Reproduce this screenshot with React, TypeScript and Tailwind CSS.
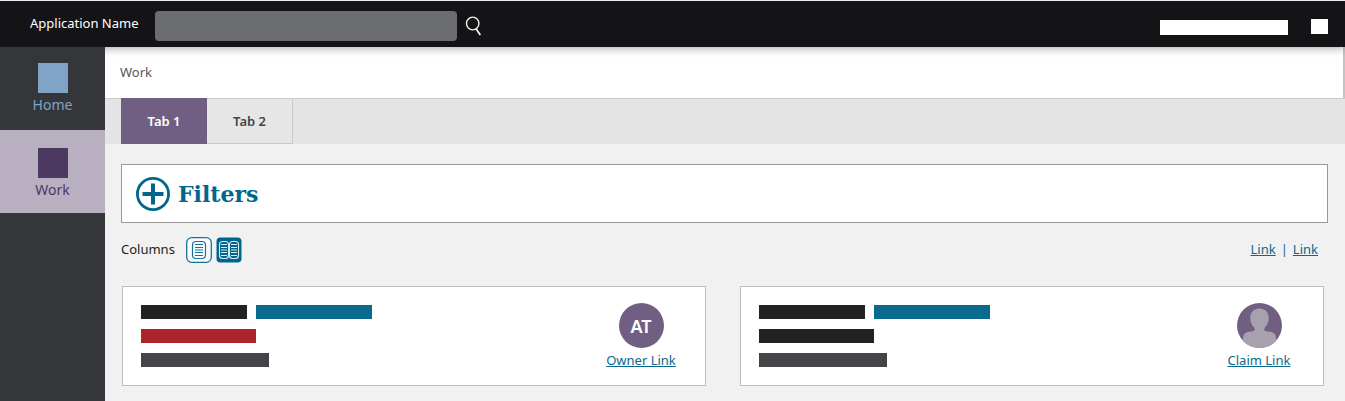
import type { ReactNode } from "react";

function SearchIcon() {
  return (
    <svg viewBox="0 0 18 20" className="h-5 w-[18px]" fill="none" stroke="#f4f4f4" strokeWidth="1.4" aria-hidden="true">
      <ellipse cx="7.7" cy="7.5" rx="6.2" ry="6.4" />
      <path d="M11.2 13 15.3 19" strokeWidth="1.8" />
    </svg>
  );
}

function PlusCircleIcon() {
  return (
    <svg viewBox="0 0 34 34" className="size-[34px]" fill="none" stroke="#00668c" aria-hidden="true">
      <circle cx="17" cy="17" r="15.6" strokeWidth="2.8" />
      <path d="M17 6.500v21M6.500 17h21" strokeWidth="4" />
    </svg>
  );
}

function OneColumnIcon() {
  return (
    <svg viewBox="0 0 26 26" className="size-[26px]" fill="none" stroke="#19729a" aria-hidden="true">
      <rect x="0.7" y="0.7" width="24.6" height="24.6" rx="5" fill="#f8fbfc" strokeWidth="1.3" />
      <rect x="6.5" y="4.5" width="13" height="17" rx="3.5" strokeWidth="1.2" />
      <path d="M9 7.5h8M9 10.5h8M9 13h8M9 15.5h8M9 18.5h8" strokeWidth="1.2" />
    </svg>
  );
}

function TwoColumnIcon() {
  return (
    <svg viewBox="0 0 26 26" className="size-[26px]" fill="none" stroke="#d9edf4" aria-hidden="true">
      <rect x="0.5" y="0.5" width="25" height="25" rx="4" fill="#00668c" stroke="none" />
      <rect x="3.5" y="4.5" width="9" height="17" rx="3" strokeWidth="1.1" />
      <rect x="13.5" y="4.5" width="9" height="17" rx="3" strokeWidth="1.1" />
      <path
        d="M5 7.5h6M5 10.5h6M5 13h6M5 15.5h6M5 18.5h6M15 7.5h6M15 10.5h6M15 13h6M15 15.5h6M15 18.5h6"
        strokeWidth="1.1"
      />
    </svg>
  );
}

function PersonAvatar() {
  return (
    <svg viewBox="0 0 45 45" className="size-[45px]" aria-hidden="true">
      <defs>
        <clipPath id="avatar-clip">
          <circle cx="22.5" cy="22.5" r="22.5" />
        </clipPath>
      </defs>
      <g clipPath="url(#avatar-clip)">
        <rect width="45" height="45" fill="#715f83" />
        <path
          fill="#a7a1ad"
          d="M22.500 5.500C17 5.500 13.300 9.300 13.300 15c0 4.400 1.800 8 4.200 9.800v2.700c-1 .9-3 1-5.500 1.200-4 .4-6 2.900-6 6.800V45h33v-9.500c0-3.900-2-6.400-6-6.800-2.500-.2-4.500-.3-5.500-1.200v-2.700c2.400-1.800 4.200-5.400 4.200-9.800 0-5.700-3.700-9.500-9.200-9.500z"
        />
      </g>
    </svg>
  );
}

function NavItem({ label, active = false }: { label: string; active?: boolean }) {
  return (
    <a
      href="#"
      aria-current={active ? "page" : undefined}
      className={
        active
          ? "flex h-[83px] flex-col items-center bg-[#b8afc1] pt-[18px] text-[#4c3960]"
          : "flex h-[83px] flex-col items-center pt-4 text-[#80a3c8]"
      }
    >
      <span className={active ? "size-[30px] bg-[#4c3960]" : "size-[30px] bg-[#80a3c8]"} />
      <span className="mt-0.5 text-sm leading-5">{label}</span>
    </a>
  );
}

function Card({ second, avatar, link }: { second: string; avatar: ReactNode; link: string }) {
  return (
    <article className="flex h-[100px] flex-1 justify-between border border-[#bcbcbc] bg-white pt-[18px] pr-7 pl-[18px]">
      <div className="flex flex-col gap-2.5">
        <div className="flex gap-[9px]">
          <span className="h-3.5 w-[106px] bg-[#222222]" />
          <span className="h-3.5 w-[116px] bg-[#09698e]" />
        </div>
        <span className={second} />
        <span className="h-3.5 w-32 bg-[#444548]" />
      </div>
      <div className="-mt-0.5 flex w-[72px] flex-col items-center">
        {avatar}
        <a href="#" className="mt-0.5 text-[13px] leading-5 whitespace-nowrap text-[#09698e] underline">
          {link}
        </a>
      </div>
    </article>
  );
}

export default function App() {
  return (
    <div className="flex min-h-screen flex-col bg-[#f1f1f1] font-['Noto_Sans','Open_Sans',sans-serif] text-[13px] text-[#222222]">
      <header className="z-10 flex h-[47px] items-center border-t border-[#e8eeee] bg-[#141416] pr-[17px] pl-[30px] shadow-[0_2px_8px_rgba(0,0,0,0.3)]">
        <span className="w-[125px] whitespace-nowrap text-white">Application Name</span>
        <form className="mr-auto flex items-center gap-2 pt-1" role="search">
          <input type="search" aria-label="Search" className="h-[30px] w-[302px] rounded bg-[#6b6c6f] px-2 text-white outline-none" />
          <button type="button" aria-label="Run search">
            <SearchIcon />
          </button>
        </form>
        <div className="flex items-center gap-[23px] pt-1">
          <span className="mt-0.5 h-[15px] w-32 bg-white" />
          <span className="h-[15px] w-[17px] bg-white" />
        </div>
      </header>

      <div className="flex flex-1">
        <nav className="z-20 w-[105px] shrink-0 bg-[#353639]">
          <NavItem label="Home" />
          <NavItem label="Work" active />
        </nav>

        <main className="min-w-0 flex-1">
          <div className="flex h-[51px] items-center border-r-2 border-[#c4c4c4] bg-white px-[15px] text-[#55565a]">Work</div>

          <div role="tablist" className="flex h-[46px] border-t border-[#cccccc] bg-[#e4e4e4] pl-4 text-sm font-semibold">
            <button type="button" role="tab" aria-selected="true" className="-mt-px w-[86px] bg-[#715f83] text-[13px] text-white">
              Tab 1
            </button>
            <button
              type="button"
              role="tab"
              aria-selected="false"
              className="w-[86px] border-r border-b border-[#c9c9c9] bg-[#e6e6e6] text-[13px] text-[#444548]"
            >
              Tab 2
            </button>
          </div>

          <div className="pt-5 pr-[17px] pb-4 pl-4">
            <button
              type="button"
              className="flex h-[59px] w-full items-center gap-2 border border-[#999999] bg-white px-3.5 text-[#00668c]"
            >
              <PlusCircleIcon />
              <span className="font-['DejaVu_Serif',serif] text-[22px] leading-7 font-bold">Filters</span>
            </button>

            <div className="mt-3.5 flex h-[26px] items-center justify-between">
              <div className="flex items-center gap-1">
                <span className="mr-[7px]">Columns</span>
                <button type="button" aria-label="One column">
                  <OneColumnIcon />
                </button>
                <button type="button" aria-label="Two columns" aria-pressed="true">
                  <TwoColumnIcon />
                </button>
              </div>
              <div className="flex gap-[5px] pr-2.5 text-[#09698e]">
                <a href="#" className="underline">
                  Link
                </a>
                <span>|</span>
                <a href="#" className="underline">
                  Link
                </a>
              </div>
            </div>

            <div className="mt-[23px] flex gap-[34px] pr-1 pl-px">
              <Card
                second="h-3.5 w-[115px] bg-[#ac2329]"
                avatar={
                  <span className="flex size-[45px] items-center justify-center rounded-full bg-[#715f83] text-lg font-semibold text-white">
                    AT
                  </span>
                }
                link="Owner Link"
              />
              <Card second="h-3.5 w-[115px] bg-[#222222]" avatar={<PersonAvatar />} link="Claim Link" />
            </div>
          </div>
        </main>
      </div>
    </div>
  );
}
